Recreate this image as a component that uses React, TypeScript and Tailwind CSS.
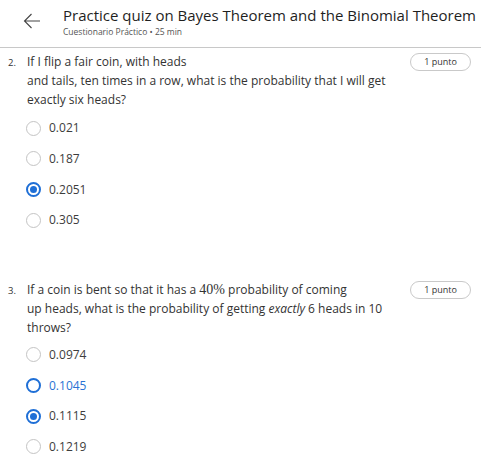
import React from "react";

type Opt = { label: string; state: "none" | "checked" | "focus" };

function Radio({ state }: { state: Opt["state"] }) {
  if (state === "checked") {
    return (
      <span className="w-[15px] h-[15px] shrink-0 rounded-full border-2 border-[#1f6fd6] flex items-center justify-center">
        <span className="w-[7px] h-[7px] rounded-full bg-[#1f6fd6]" />
      </span>
    );
  }
  if (state === "focus") {
    return <span className="w-[15px] h-[15px] shrink-0 rounded-full border-2 border-[#1f6fd6]" />;
  }
  return <span className="w-[15px] h-[15px] shrink-0 rounded-full border-[1.5px] border-[#c4c4c4]" />;
}

function Options({ opts }: { opts: Opt[] }) {
  return (
    <div className="flex flex-col">
      {opts.map((o) => (
        <div key={o.label} className="h-[30.67px] flex items-center pl-[26px]">
          <Radio state={o.state} />
          <span
            className={
              "ml-[8px] text-[12px] leading-[18px] " +
              (o.state === "focus" ? "text-[#2a73d3]" : "text-[#3d3d3d]")
            }
          >
            {o.label}
          </span>
        </div>
      ))}
    </div>
  );
}

function Badge() {
  return (
    <div className="w-[61px] h-[18px] rounded-full border border-[#c9c9c9] flex items-center justify-center text-[9px] text-[#333] shrink-0">
      1 punto
    </div>
  );
}

export default function App() {
  return (
    <div className="w-[481px] h-[471px] bg-white overflow-hidden font-['Open_Sans',sans-serif] text-[#333]">
      <div className="h-[48px] border-b border-[#c8c8c8] flex items-center">
        <svg width="18" height="16" viewBox="0 0 18 16" className="ml-[23px] mt-[-5px] shrink-0" fill="none">
          <path d="M17 8H1.5M8.5 1L1.5 8L8.5 15" stroke="#444" strokeWidth="1.1" />
        </svg>
        <div className="ml-[22px] mt-[-4px] flex flex-col">
          <div className="text-[15px] leading-[20px] text-[#1f1f1f] whitespace-nowrap">
            Practice quiz on Bayes Theorem and the Binomial Theorem
          </div>
          <div className="text-[8.5px] leading-[12px] text-[#555] mt-[1px]">Cuestionario Práctico • 25 min</div>
        </div>
      </div>

      <div className="flex pt-[4px] pr-[10px]">
        <div className="w-[27px] pl-[8px] text-[9.5px] leading-[19px] pt-[1px] text-[#333] shrink-0">2.</div>
        <div className="flex-1 text-[12px] leading-[19px] text-[#333] whitespace-nowrap">
          If I flip a fair coin, with heads
          <br />
          and tails, ten times in a row, what is the probability that I will get
          <br />
          exactly six heads?
        </div>
        <div className="mt-[1px]">
          <Badge />
        </div>
      </div>

      <div className="mt-[4px]">
        <Options
          opts={[
            { label: "0.021", state: "none" },
            { label: "0.187", state: "none" },
            { label: "0.2051", state: "checked" },
            { label: "0.305", state: "none" },
          ]}
        />
      </div>

      <div className="flex mt-[44px] pr-[10px]">
        <div className="w-[27px] pl-[8px] text-[9.5px] leading-[19px] pt-[1px] text-[#333] shrink-0">3.</div>
        <div className="flex-1 text-[12px] leading-[19px] text-[#333] whitespace-nowrap">
          If a coin is bent so that it has a{" "}
          <span className="font-['Liberation_Serif'] text-[14px] leading-[14px]">40%</span> probability of coming
          <br />
          up heads, what is the probability of getting <i>exactly</i> 6 heads in 10
          <br />
          throws?
        </div>
        <div className="mt-[1px]">
          <Badge />
        </div>
      </div>

      <div className="mt-[3px]">
        <Options
          opts={[
            { label: "0.0974", state: "none" },
            { label: "0.1045", state: "focus" },
            { label: "0.1115", state: "checked" },
            { label: "0.1219", state: "none" },
          ]}
        />
      </div>
    </div>
  );
}
